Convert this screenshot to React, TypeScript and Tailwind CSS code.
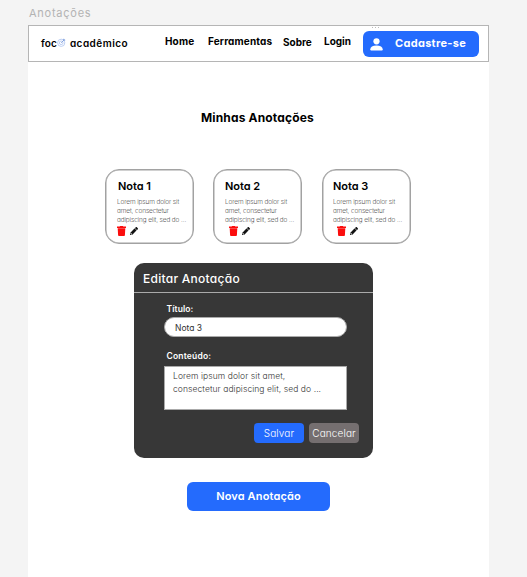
import React from "react";

function Trash() {
  return (
    <svg width="9" height="10" viewBox="0 0 9 10" fill="#fb0d0d">
      <path d="M0 .5h2.600L3.200 0h2.600l.6.5H9v1.500H0zM.7 2.300h7.600L7.900 9.300q-.1.700-.8.700H1.900q-.7 0-.8-.7z" />
    </svg>
  );
}

function Pencil() {
  return (
    <svg width="8" height="8" viewBox="0 0 512 512" fill="#111">
      <path d="M498 142l-46 46c-5 5-13 5-17 0L324 77c-5-5-5-12 0-17l46-46c19-19 49-19 68 0l60 60c19 19 19 49 0 68zM284 100L22 362 .4 484c-3 16 12 30 28 28l122-22 262-262c5-5 5-13 0-17L301 100c-4-5-12-5-17 0zM88 424h48v36l-64 12-32-32 12-64h36z" />
    </svg>
  );
}

function Person() {
  return (
    <svg width="13" height="13" viewBox="0 0 13 13" fill="#fff">
      <circle cx="6.5" cy="3.3" r="3.100" />
      <path d="M.2 11.600C.4 8.800 2.600 7.500 6.500 7.500s6.100 1.300 6.300 4.100c0 .7-.3.9-.9.9H1.100c-.6 0-.9-.2-.9-.9z" />
    </svg>
  );
}

function Target() {
  return (
    <svg width="9" height="9" viewBox="0 0 9 9" fill="none" stroke="#b4c8f0" strokeWidth=".9">
      <circle cx="4.200" cy="4.800" r="3.600" />
      <circle cx="4.200" cy="4.800" r="1.800" />
      <path d="M4.200 4.800L7.500 1.500M6.700.8v1.400h1.500" stroke="#7f9edb" />
    </svg>
  );
}

type NoteProps = { title: string; card: string; body: string; icons: string };

function Note({ title, card, body, icons }: NoteProps) {
  return (
    <article className={"h-[75px] w-[89px] shrink-0 rounded-[14px] border border-[#a2a2a2] pt-[9px] shadow-[inset_0_0_0_0.5px_#a2a2a2] " + card}>
      <h2 className="text-[11px] leading-[15px] font-semibold tracking-[-0.05px]">{title}</h2>
      <p className={"text-[6.5px] leading-[9px] font-extralight tracking-[-0.1px] text-black " + body}>
        Lorem ipsum dolor sit<br />amet, consectetur<br />adipiscing elit, sed do ...
      </p>
      <div className={"mt-px flex items-center " + icons}>
        <Trash />
        <Pencil />
      </div>
    </article>
  );
}

export default function App() {
  return (
    <div className="h-[577px] w-[527px] overflow-hidden bg-[#f4f4f4] pl-7 font-['Inter',sans-serif] whitespace-nowrap text-black [font-feature-settings:'cv11']">
      <div className="h-[25px] pt-[5px] pl-px text-[11px] leading-4 tracking-[0.75px] text-[#b3b3b3] [font-feature-settings:normal]">Anotações</div>
      <main className="h-[552px] w-[461px] bg-white">
        <header className="flex h-[37px] border border-[#b5b5b5] pl-3 text-[10px] leading-4 font-bold">
          <div className="flex w-[124px] pt-[9px] font-semibold tracking-[0.47px]">
            <span className="tracking-[0.1px]">foc</span>
            <span className="mr-1 pt-[3px]"><Target /></span>
            <span>acadêmico</span>
          </div>
          <nav className="flex pt-[7px] tracking-[0.15px]">
            <span className="w-[43px]">Home</span>
            <span className="w-[75px]">Ferramentas</span>
            <span className="w-[41px] pt-px tracking-normal">Sobre</span>
            <span className="w-[39px] tracking-normal">Login</span>
          </nav>
          <div>
            <div className="flex h-[5px] gap-[2px] pt-px pl-[9px]">
              <i className="size-px bg-[#bbb]" />
              <i className="size-px bg-[#bbb]" />
              <i className="size-px bg-[#bbb]" />
            </div>
            <button className="flex h-[26px] w-[116px] items-center rounded-md bg-[#246bfd] pl-[7px] text-[11px] font-bold tracking-[0.3px] text-white">
              <Person />
              <span className="ml-3 -mt-[3px]">Cadastre-se</span>
            </button>
          </div>
        </header>
        <h1 className="mt-12 pl-[173px] text-[12px] leading-4 font-bold tracking-[0.15px]">Minhas Anotações</h1>
        <section className="mt-[43px] flex pl-[77px]">
          <Note title="Nota 1" card="pl-3" body="-ml-px mt-1" icons="-ml-px gap-1" />
          <Note title="Nota 2" card="ml-[19px] pl-[11px]" body="mt-1" icons="pl-1 gap-1" />
          <Note title="Nota 3" card="ml-5 pl-[10px]" body="mt-1" icons="pl-1 gap-1" />
        </section>
        <section className="mt-[19px] ml-[106px] h-[195px] w-[239px] rounded-[10px] bg-[#373737] text-white">
          <h2 className="h-[30px] border-b border-[#aaa] pt-2 pl-[9px] text-[12px] leading-4 font-medium tracking-[0.27px]">Editar Anotação</h2>
          <div className="px-[30px]">
            <label className="mt-[10px] ml-[2.5px] block text-[8.5px] leading-3 font-semibold tracking-[0.1px]">Título:</label>
            <div className="mt-[2px] h-5 w-[183px] rounded-full border border-[#aaa] bg-white pl-[10px] text-[8.5px] leading-5 text-[#333]">Nota 3</div>
            <label className="mt-[13px] ml-[2.5px] block text-[8.5px] leading-3 font-semibold tracking-[0.2px]">Conteúdo:</label>
            <div className="mt-1 h-11 w-[183px] border border-[#aaa] bg-white pt-[3px] pl-2 text-[8.5px] leading-[13px] font-light tracking-[0.08px] text-[#333]">
              Lorem ipsum dolor sit amet,<br />consectetur adipiscing elit, sed do ...
            </div>
          </div>
          <div className="mt-[13px] ml-[120px] flex gap-[5px] text-[10px] font-light tracking-[0.12px]">
            <button className="h-5 w-[50px] rounded bg-[#246bfd]">Salvar</button>
            <button className="h-5 w-[50px] rounded bg-[#756f70]">Cancelar</button>
          </div>
        </section>
        <button className="mt-6 ml-[159px] block h-[29px] w-[143px] rounded-md bg-[#246bfd] text-[11px] font-semibold tracking-[0.15px] text-white">Nova Anotação</button>
      </main>
    </div>
  );
}
